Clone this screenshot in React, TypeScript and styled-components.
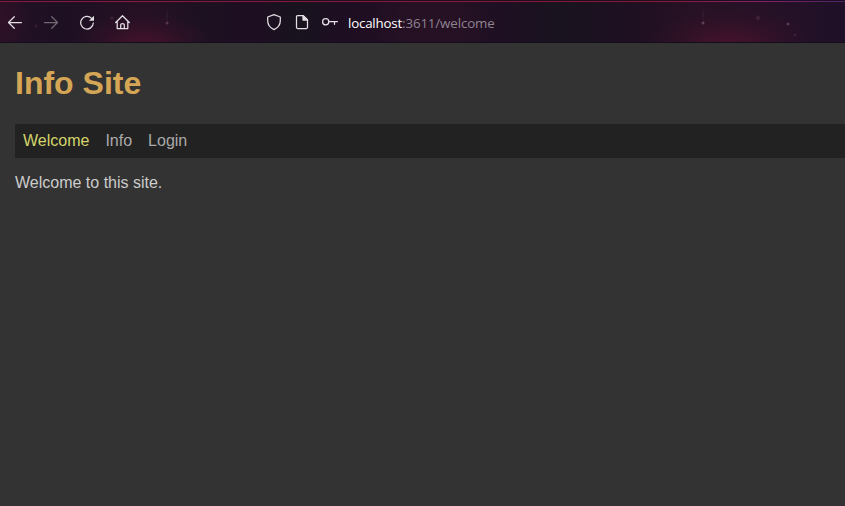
import React from "react";
import styled, { createGlobalStyle } from "styled-components";

const GlobalStyle = createGlobalStyle`
  * { box-sizing: border-box; }
  html, body { margin: 0; background: #333; overflow: hidden; }
`;

const Window = styled.div`
  display: flex;
  flex-direction: column;
  height: 100vh;
  overflow: hidden;
  background: #333;
`;

const TopEdge = styled.div`
  flex: none;
  height: 2px;
  border-top: 1px solid #1b0e20;
  background: linear-gradient(90deg, #8c1a40, #8a1934 78%, #86206a 90%, #4c2468);
`;

const Toolbar = styled.header`
  display: flex;
  align-items: center;
  flex: none;
  height: 41px;
  padding-left: 7px;
  border-bottom: 1px solid #120c1c;
  background:
    radial-gradient(circle at 167px 21px, #765169 0, #4c2940 1px, transparent 2px),
    radial-gradient(ellipse 1px 8px at 167px 14px, #352033, transparent),
    radial-gradient(circle at 112px 16px, #4b2942 0, transparent 2px),
    radial-gradient(circle at 36px 24px, #412239 0, transparent 2px),
    radial-gradient(circle at 703px 21px, #886075 0, #53304a 1px, transparent 2px),
    radial-gradient(ellipse 1px 8px at 703px 13px, #382136, transparent),
    radial-gradient(circle at 758px 16px, #482942 0, transparent 3px),
    radial-gradient(circle at 788px 22px, #74506a 0, transparent 2px),
    radial-gradient(circle at 795px 33px, #422544 0, transparent 2px),
    radial-gradient(ellipse 72px 30px at 144px 41px, rgba(70, 19, 44, 0.9), rgba(62, 18, 42, 0.35) 60%, transparent),
    radial-gradient(ellipse 84px 34px at 730px 41px, rgba(72, 19, 44, 0.9), rgba(62, 18, 42, 0.35) 60%, transparent),
    radial-gradient(ellipse 28px 50px at 0 16px, #2f1126, transparent),
    radial-gradient(ellipse 60px 50px at 433px 23px, #261124 50%, transparent),
    linear-gradient(90deg, #251126 0, #1d1022 60px, #261024 145px, #1c1121 205px, #1e0e22 250px, #18131e 300px, #1e0e22 340px, #230f24 440px, #1d1022 510px, #19131f 560px, #1e1021 630px, #281124 700px, #251127 780px, #1e1027 100%);
`;

const ToolButton = styled.button<{ $faded?: boolean }>`
  display: flex;
  align-items: center;
  justify-content: center;
  width: 16px;
  height: 18px;
  margin: 0 20px 0 0;
  padding: 0;
  border: 0;
  background: none;
  color: ${({ $faded }) => ($faded ? "#716871" : "#e4dfe4")};
`;

const AddressBar = styled.div`
  display: flex;
  align-items: center;
  margin-left: 115px;
`;

const SiteButton = styled(ToolButton)`
  margin-right: 12px;
`;

const Address = styled.div`
  margin-left: -2px;
  padding-top: 2px;
  color: #8e8390;
  font: 13.33px/18px "Open Sans", "Noto Sans", sans-serif;
  letter-spacing: -0.13px;
  white-space: nowrap;
`;

const Host = styled.span`
  color: #fff;
  letter-spacing: -0.2px;
`;

const Icon = styled.svg`
  display: block;
  flex: none;
  fill: none;
  stroke: currentColor;
  stroke-width: 1.25;
  stroke-linecap: round;
  stroke-linejoin: round;
`;

const Page = styled.main`
  padding-left: 15px;
  color: #ccc;
  font: 16px/18px "Liberation Sans", Arial, sans-serif;
`;

const Title = styled.h1`
  margin: 21px 0 22px;
  color: #d4a655;
  font-size: 32px;
  line-height: 38px;
`;

const Nav = styled.nav`
  display: flex;
  gap: 16px;
  height: 34px;
  padding: 8px;
  background: #222;
`;

const NavLink = styled.a<{ $active?: boolean }>`
  color: ${({ $active }) => ($active ? "#d5d56a" : "#aaa")};
  text-decoration: none;
`;

const Message = styled.p`
  margin: 16px 0 0;
`;

export default function App() {
  return (
    <Window>
      <GlobalStyle />
      <TopEdge />
      <Toolbar>
        <ToolButton aria-label="Back">
          <Icon width="16" height="16" viewBox="0 0 16 16">
            <path d="M14.5 8.5H1.7M7.3 2.7 1.5 8.5l5.8 5.8" />
          </Icon>
        </ToolButton>
        <ToolButton aria-label="Forward" $faded>
          <Icon width="16" height="16" viewBox="0 0 16 16">
            <path d="M1.5 8.5h12.8M8.7 2.7l5.8 5.8-5.8 5.8" />
          </Icon>
        </ToolButton>
        <ToolButton aria-label="Reload">
          <Icon width="16" height="16" viewBox="0 0 16 16">
            <path d="M12.6 4.4A6.3 6.3 0 1 0 14.3 9" />
            <path d="M15 1.8v5H10Z" fill="currentColor" stroke="none" />
          </Icon>
        </ToolButton>
        <ToolButton aria-label="Home">
          <Icon width="16" height="16" viewBox="0 0 16 16">
            <path d="M.7 8.5 7.5 1.7l6.8 6.8M2.2 7.5v7h10.6v-7M5.7 14.2v-3.4q0-1.3 1.8-1.3t1.8 1.3v3.4" />
          </Icon>
        </ToolButton>
        <AddressBar>
          <SiteButton aria-label="Tracking protection">
            <Icon width="16" height="18" viewBox="0 0 16 18">
              <path d="M8 1.7 14.3 4v3.8c0 4.2-2.5 7.1-6.3 8.8-3.8-1.7-6.3-4.6-6.3-8.8V4Z" />
            </Icon>
          </SiteButton>
          <SiteButton aria-label="Page information">
            <Icon width="16" height="16" viewBox="0 0 16 16">
              <path d="M3.5 1.6h5.8l4.2 4.2v7.5a1.2 1.2 0 0 1-1.2 1.2H3.7a1.2 1.2 0 0 1-1.2-1.2V2.8a1.2 1.2 0 0 1 1-1.2Z" />
              <path d="M9 1.6v4.5h4.5Z" fill="currentColor" />
            </Icon>
          </SiteButton>
          <SiteButton aria-label="Saved login">
            <Icon width="16" height="16" viewBox="0 0 16 16">
              <circle cx="3.7" cy="7.8" r="3.1" />
              <path d="M7 7.5h8.4M12.5 7.5v2.8" />
            </Icon>
          </SiteButton>
          <Address><Host>localhost</Host>:3611/welcome</Address>
        </AddressBar>
      </Toolbar>
      <Page>
        <Title>Info Site</Title>
        <Nav>
          <NavLink $active>Welcome</NavLink>
          <NavLink>Info</NavLink>
          <NavLink>Login</NavLink>
        </Nav>
        <Message>Welcome to this site.</Message>
      </Page>
    </Window>
  );
}
